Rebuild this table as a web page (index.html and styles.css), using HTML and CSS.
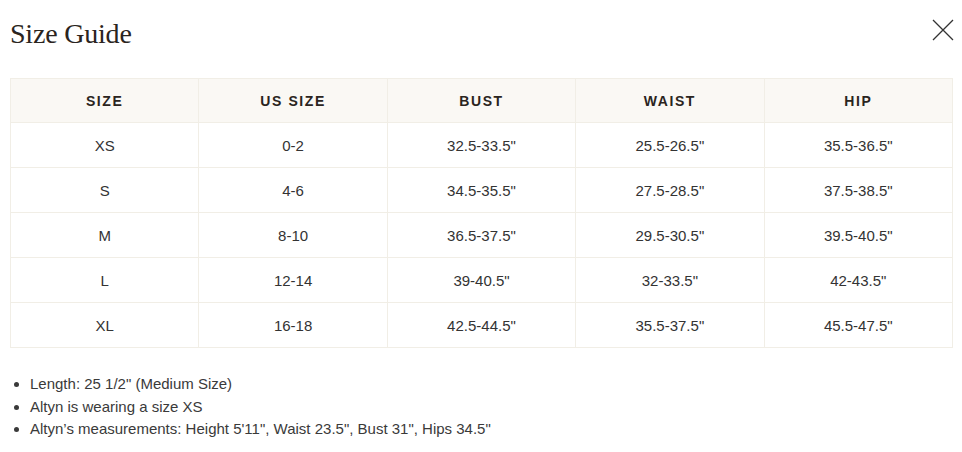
FILE: index.html
```html
<!DOCTYPE html>
<html>
<head>
<meta charset="utf-8">
<link rel="stylesheet" href="styles.css">
</head>
<body>
<div class="modal">
  <div class="head">
    <h1 class="title">Size Guide</h1>
    <button class="close" aria-label="Close">
      <svg width="22" height="22" viewBox="0 0 22 22"><path d="M1 1L21 21M21 1L1 21" stroke="#333" stroke-width="1.3" fill="none"/></svg>
    </button>
  </div>
  <table class="sizes">
    <thead>
      <tr><th>SIZE</th><th>US SIZE</th><th>BUST</th><th>WAIST</th><th>HIP</th></tr>
    </thead>
    <tbody>
      <tr><td>XS</td><td>0-2</td><td>32.5-33.5"</td><td>25.5-26.5"</td><td>35.5-36.5"</td></tr>
      <tr><td>S</td><td>4-6</td><td>34.5-35.5"</td><td>27.5-28.5"</td><td>37.5-38.5"</td></tr>
      <tr><td>M</td><td>8-10</td><td>36.5-37.5"</td><td>29.5-30.5"</td><td>39.5-40.5"</td></tr>
      <tr><td>L</td><td>12-14</td><td>39-40.5"</td><td>32-33.5"</td><td>42-43.5"</td></tr>
      <tr><td>XL</td><td>16-18</td><td>42.5-44.5"</td><td>35.5-37.5"</td><td>45.5-47.5"</td></tr>
    </tbody>
  </table>
  <ul class="notes">
    <li>Length: 25 1/2" (Medium Size)</li>
    <li>Altyn is wearing a size XS</li>
    <li>Altyn’s measurements: Height 5'11", Waist 23.5", Bust 31", Hips 34.5"</li>
  </ul>
</div>
</body>
</html>
```
FILE: styles.css
```css
html, body { margin: 0; padding: 0; background: #fff; }
body { font-family: "Liberation Sans", Arial, sans-serif; color: #333; }
.modal { padding: 0 9px 0 10px; }
.head { display: flex; justify-content: space-between; align-items: flex-start; height: 78px; }
.title { margin: 18px 0 0 0; font-family: "Liberation Serif", "Times New Roman", serif; font-weight: 400; font-size: 28px; color: #2a2420; letter-spacing: -0.2px; }
.close { border: 0; background: none; padding: 0; margin: 19px -1px 0 0; width: 22px; height: 22px; cursor: pointer; }
.close svg { display: block; }
.sizes { width: 943px; border-collapse: collapse; table-layout: fixed; border: 1px solid #f1eee6; }
.sizes th, .sizes td { border: 1px solid #f1eee6; text-align: center; }
.sizes th { background: #faf8f4; height: 43px; padding: 0; font-size: 14px; font-weight: 700; letter-spacing: 1.6px; color: #2a2420; }
.sizes td { height: 44px; padding: 0; font-size: 15px; color: #333; }
.notes { margin: 25px 0 0 0; padding: 0 0 0 20px; font-size: 15px; line-height: 22.5px; color: #3a3a3a; }
.notes li { padding-left: 0; }
```
